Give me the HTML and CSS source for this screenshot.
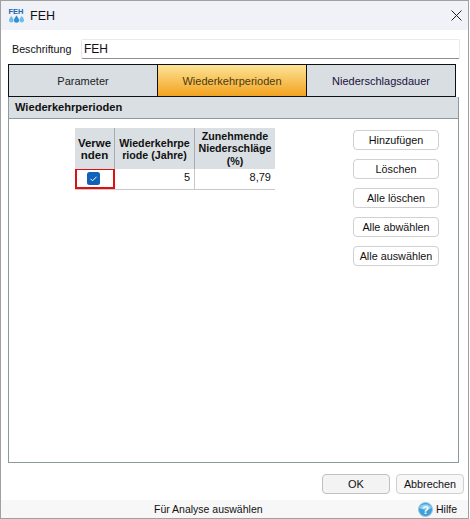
FILE: index.html
```html
<!DOCTYPE html>
<html lang="de">
<head>
<meta charset="utf-8">
<title>FEH</title>
<link rel="stylesheet" href="styles.css">
</head>
<body>
<div class="window">
  <header class="titlebar">
    <div class="app">
      <svg class="logo" width="17" height="18" viewBox="0 0 17 18">
        <text x="0.5" y="7" class="logo-text">FEH</text>
        <path d="M3.300 9c1.500 2 2.300 3.100 2.300 4.300a2.300 2.300 0 0 1-4.600 0c0-1.200.8-2.300 2.300-4.300z" fill="#6cbde8"/>
        <path d="M8.500 8.500c1.700 2.200 2.500 3.400 2.500 4.700a2.500 2.500 0 0 1-5 0c0-1.300.8-2.500 2.500-4.700z" fill="#2f8fd4"/>
        <path d="M13.700 9c1.500 2 2.300 3.100 2.300 4.300a2.300 2.300 0 0 1-4.600 0c0-1.200.8-2.300 2.300-4.300z" fill="#6cbde8"/>
      </svg>
      <span class="title">FEH</span>
    </div>
    <svg class="close" width="11" height="11" viewBox="0 0 11 11"><path d="M.5.5l10 10M10.500.5l-10 10" stroke="#222" fill="none"/></svg>
  </header>
  <main class="content">
    <div class="caption-row">
      <label class="caption-label">Beschriftung</label>
      <div class="caption-input">FEH</div>
    </div>
    <nav class="tabs">
      <div class="tab tab-first">Parameter</div>
      <div class="tab tab-active">Wiederkehrperioden</div>
      <div class="tab tab-last">Niederschlagsdauer</div>
    </nav>
    <section class="panel">
      <h2 class="panel-head">Wiederkehrperioden</h2>
      <div class="panel-body">
        <div class="grid">
          <div class="gh gh-1">Verwe<br>nden</div>
          <div class="gh gh-2">Wiederkehrpe<br>riode (Jahre)</div>
          <div class="gh gh-3">Zunehmende<br>Niederschläge<br>(%)</div>
          <div class="gc gc-check">
            <svg width="13" height="13" viewBox="0 0 13 13"><rect width="13" height="13" rx="2.500" fill="#0f62b8"/><path d="M3.500 6.800l2 2 4-4" stroke="#fff" fill="none"/></svg>
          </div>
          <div class="gc gc-num">5</div>
          <div class="gc gc-num gc-end">8,79</div>
        </div>
        <div class="actions">
          <button class="btn">Hinzufügen</button>
          <button class="btn">Löschen</button>
          <button class="btn">Alle löschen</button>
          <button class="btn">Alle abwählen</button>
          <button class="btn">Alle auswählen</button>
        </div>
      </div>
    </section>
    <div class="dialog-buttons">
      <button class="btn btn-ok">OK</button>
      <button class="btn btn-cancel">Abbrechen</button>
    </div>
  </main>
  <footer class="statusbar">
    <span class="status-text">Für Analyse auswählen</span>
    <span class="help">
      <svg width="15" height="15" viewBox="0 0 15 15"><circle cx="7.500" cy="7.500" r="7" fill="#3f9fd8" stroke="#9cc9e6"/><path d="M1.500 6a6.200 5 0 0 1 12 0c-3 2-9 2-12 0z" fill="#8fd0f0"/><text x="7.500" y="11.500" class="help-q">?</text></svg>
      Hilfe
    </span>
  </footer>
</div>
</body>
</html>
```
FILE: styles.css
```css
* { box-sizing: border-box; }
html, body { margin: 0; padding: 0; background: #fff; }
body {
  width: 470px;
  height: 519px;
  overflow: hidden;
  font-family: "Liberation Sans", Arial, sans-serif;
  font-size: 11px;
  color: #111;
}
.window {
  width: 469px;
  height: 519px;
  border: 1px solid #a0a0a0;
  display: flex;
  flex-direction: column;
  background: #fff;
}
.titlebar {
  height: 29px;
  flex: none;
  background: #f0f2f8;
  display: flex;
  align-items: center;
  justify-content: space-between;
  padding: 0 6px 0 7px;
}
.app { display: flex; align-items: center; gap: 5px; }
.logo { display: block; }
.logo-text { font: bold 7.500px "Liberation Sans", sans-serif; fill: #1668b0; }
.title { font-size: 12.500px; color: #111; }
.close { display: block; }
.content {
  flex: 1;
  display: flex;
  flex-direction: column;
  padding: 9px 8px 0 7px;
  min-height: 0;
}
.caption-row { display: flex; align-items: center; height: 20px; }
.caption-label { width: 73px; padding-left: 4px; font-size: 10.700px; }
.caption-input {
  width: 379px;
  height: 20px;
  padding: 2px;
  background: #fff;
  border: 1px solid #eaeaea;
  border-bottom-color: #8f8f8f;
  border-radius: 2px;
  font-size: 12px;
}
.tabs {
  display: flex;
  height: 33px;
  margin-top: 5px;
  width: 448px;
  border: 1px solid #111;
}
.tab {
  display: flex;
  align-items: center;
  justify-content: center;
  background: #d9dee2;
  color: #222;
}
.tab-first { width: 148px; }
.tab-active {
  width: 150px;
  background: linear-gradient(#fde497, #f2a21f);
  border-left: 1px solid #111;
  border-right: 1px solid #111;
  color: #4a3a10;
}
.tab-last { flex: 1; color: #1a1040; }
.panel {
  width: 451px;
  height: 366px;
  border: 1px solid #8c9a9e;
  border-top: 0;
  display: flex;
  flex-direction: column;
}
.panel-head {
  margin: 0;
  height: 22px;
  background: #dadfe3;
  border-bottom: 1px solid #8c9a9e;
  font-size: 11.100px;
  font-weight: 700;
  padding: 2px 6px;
  line-height: 16px;
}
.panel-body {
  flex: 1;
  display: flex;
  align-items: flex-start;
  padding: 9px 0 0 66px;
}
.grid {
  display: grid;
  grid-template-columns: 40px 80px 80px;
  grid-template-rows: 41px 20px;
  width: 200px;
  border-bottom: 1px solid #c8c8c8;
  border-right: 1px solid #c8c8c8;
}
.gh {
  background: #dadfe3;
  border-right: 1px solid #a8adb0;
  font-weight: 700;
  font-size: 10.700px;
  text-align: center;
  line-height: 12px;
  display: flex;
  align-items: center;
  justify-content: center;
}
.gh-1 { font-size: 11.500px; padding-top: 1px; }
.gh-2 { padding-top: 1px; }
.gh-3 { border-right: 0; line-height: 12.500px; }
.gc { background: #fff; display: flex; align-items: center; }
.gc-check {
  justify-content: center;
  border: 2px solid #e01010;
  border-top-width: 1px;
  padding-right: 4px;
}
.gc-num {
  justify-content: flex-end;
  padding: 0 4px 4px 0;
  border-right: 1px solid #c8c8c8;
}
.gc-end { border-right: 0; }
.actions {
  margin-left: 78px;
  margin-top: 2px;
  display: flex;
  flex-direction: column;
  align-items: center;
  gap: 9px;
  width: 86px;
}
.btn {
  width: 86px;
  height: 20px;
  padding: 0;
  background: #fff;
  border: 1px solid #d0d0d0;
  border-radius: 4px;
  font: inherit;
  font-size: 10.800px;
  color: #111;
}
.dialog-buttons {
  display: flex;
  justify-content: flex-end;
  gap: 6px;
  margin-top: 11px;
  width: 456px;
}
.btn-ok { width: 68px; background: #f3f3f3; border-color: #c0c0c0; font-size: 11px; }
.btn-cancel { width: 68px; background: #f7f7f7; }
.statusbar {
  height: 18px;
  flex: none;
  background: #f7f7f7;
  display: flex;
  align-items: center;
  justify-content: space-between;
  padding: 0 11px 0 153px;
  font-size: 10.500px;
}
.help { display: flex; align-items: center; gap: 3px; }
.help svg { display: block; }
.help-q { font: bold 11px "Liberation Sans", sans-serif; fill: #fff; text-anchor: middle; }
```
